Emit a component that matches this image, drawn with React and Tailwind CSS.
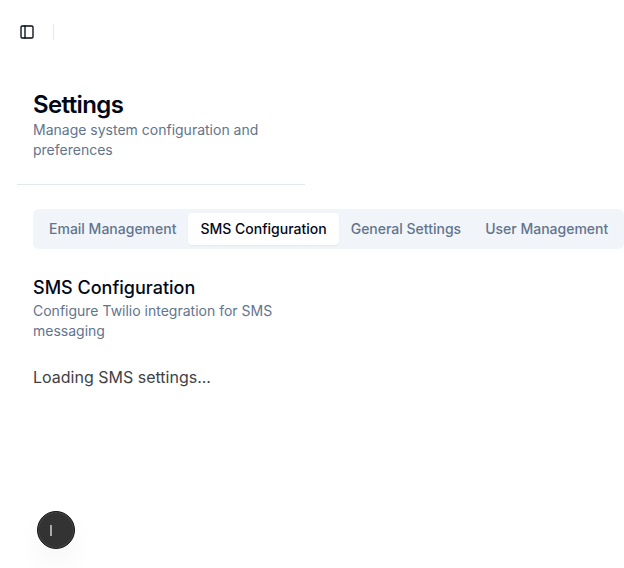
import React from "react";
import { PanelLeft } from "lucide-react";

const tabs = ["Email Management", "SMS Configuration", "General Settings", "User Management"];

export default function App() {
  return (
    <div className="relative h-[568px] w-[624px] overflow-hidden bg-white pl-[17px] font-['Inter',sans-serif] text-[#020817]">
      <header className="flex h-16 items-center">
        <button aria-label="Toggle sidebar" className="ml-0.5 flex size-4 items-center justify-center">
          <PanelLeft size={16} />
        </button>
        <div className="ml-[18px] h-4 w-px bg-slate-200" />
      </header>
      <main>
        <div className="w-72 border-b border-slate-200 px-4 pt-[25px] pb-6">
          <h1 className="text-2xl/[31px] font-semibold tracking-tight">Settings</h1>
          <p className="text-sm text-slate-500">Manage system configuration and preferences</p>
        </div>
        <div className="px-4 pt-6">
          <div className="inline-flex h-10 items-center rounded-md bg-slate-100 p-1">
            {tabs.map((tab, i) => (
              <button
                key={tab}
                className={
                  i === 1
                    ? "rounded-sm bg-white px-3 py-1.5 text-sm font-medium whitespace-nowrap text-[#020817] shadow-[0_1px_2px_0_rgba(0,0,0,0.05)]"
                    : "rounded-sm px-3 py-1.5 text-sm font-medium whitespace-nowrap text-slate-500"
                }
              >
                {tab}
              </button>
            ))}
          </div>
          <section className="mt-[25px] w-64">
            <h2 className="text-lg/[27px] font-medium">SMS Configuration</h2>
            <p className="text-sm text-slate-500">Configure Twilio integration for SMS messaging</p>
            <p className="mt-6 text-base text-[#3f4147]">Loading SMS settings...</p>
          </section>
        </div>
      </main>
      <div className="absolute top-[511px] left-[37px] flex size-[38px] items-center rounded-full border border-[#171717] bg-[#333] pl-3 shadow-[inset_0_0_0_1px_#454545,0_16px_32px_-8px_rgba(0,0,0,0.12)]">
        <div className="h-[11px] w-[2px] bg-[#aaa]" />
      </div>
    </div>
  );
}
